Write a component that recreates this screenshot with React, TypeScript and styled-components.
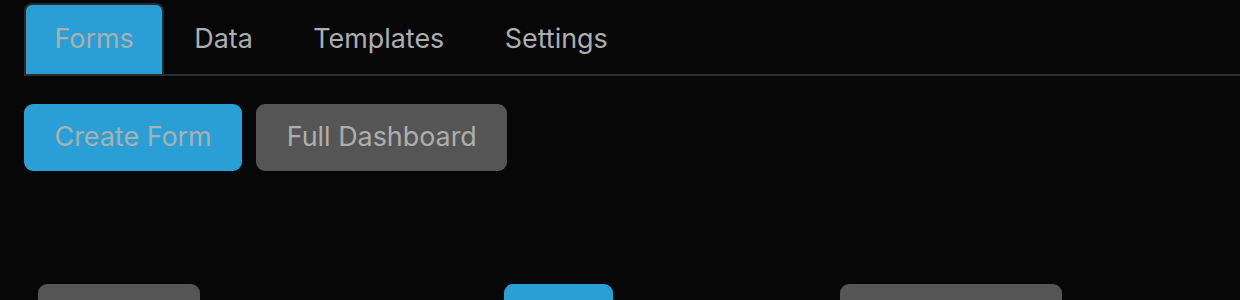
import React from "react";
import styled, { createGlobalStyle, css } from "styled-components";

const Global = createGlobalStyle`
  html, body {
    margin: 0;
    padding: 0;
    background: #070707;
    overflow: hidden;
  }
  body {
    font-family: Inter, "Liberation Sans", Arial, sans-serif;
    color: #adafae;
  }
`;

const Page = styled.div`
  padding: 3px 0 0 24px;
  display: flex;
  flex-direction: column;
`;

const TabList = styled.nav`
  display: flex;
  align-items: flex-end;
  border-bottom: 2px solid #2e2e2e;
`;

const Tab = styled.a<{ $active?: boolean }>`
  display: block;
  font-size: 26.9px;
  line-height: 42px;
  padding: 12px 28px 15px 28.5px;
  border: 2px solid transparent;
  border-bottom: none;
  border-radius: 8px 8px 0 0;
  color: #adafae;
  text-decoration: none;
  cursor: pointer;
  ${(p) =>
    p.$active &&
    css`
      background: #2a9fd6;
      border-color: #2a2a2a;
    `}
`;

const ButtonRow = styled.div`
  display: flex;
  gap: 14px;
  margin-top: 28px;
`;

const Button = styled.button<{ $variant: "primary" | "secondary" }>`
  font-family: Inter, "Liberation Sans", Arial, sans-serif;
  font-size: 26.9px;
  line-height: 42px;
  padding: 9px 28.5px 12px;
  border: 2px solid transparent;
  border-radius: 9px;
  color: #adafae;
  background: ${(p) => (p.$variant === "primary" ? "#2a9fd6" : "#555555")};
  cursor: pointer;
`;

const TableRow = styled.div`
  display: grid;
  grid-template-columns: 466px 336px 1fr;
  margin-top: 113px;
`;

const Cell = styled.div`
  padding: 0 14px;
  display: flex;
  align-items: flex-start;
`;

const tabs = ["Forms", "Data", "Templates", "Settings"];

export default function App() {
  return (
    <>
      <Global />
      <Page>
        <TabList>
          {tabs.map((t, i) => (
            <Tab key={t} $active={i === 0}>
              {t}
            </Tab>
          ))}
        </TabList>
        <ButtonRow>
          <Button $variant="primary">Create Form</Button>
          <Button $variant="secondary">Full Dashboard</Button>
        </ButtonRow>
        <TableRow>
          <Cell>
            <Button $variant="secondary">Preview</Button>
          </Cell>
          <Cell>
            <Button $variant="primary">Edit</Button>
          </Cell>
          <Cell>
            <Button $variant="secondary">Submissions</Button>
          </Cell>
        </TableRow>
      </Page>
    </>
  );
}
